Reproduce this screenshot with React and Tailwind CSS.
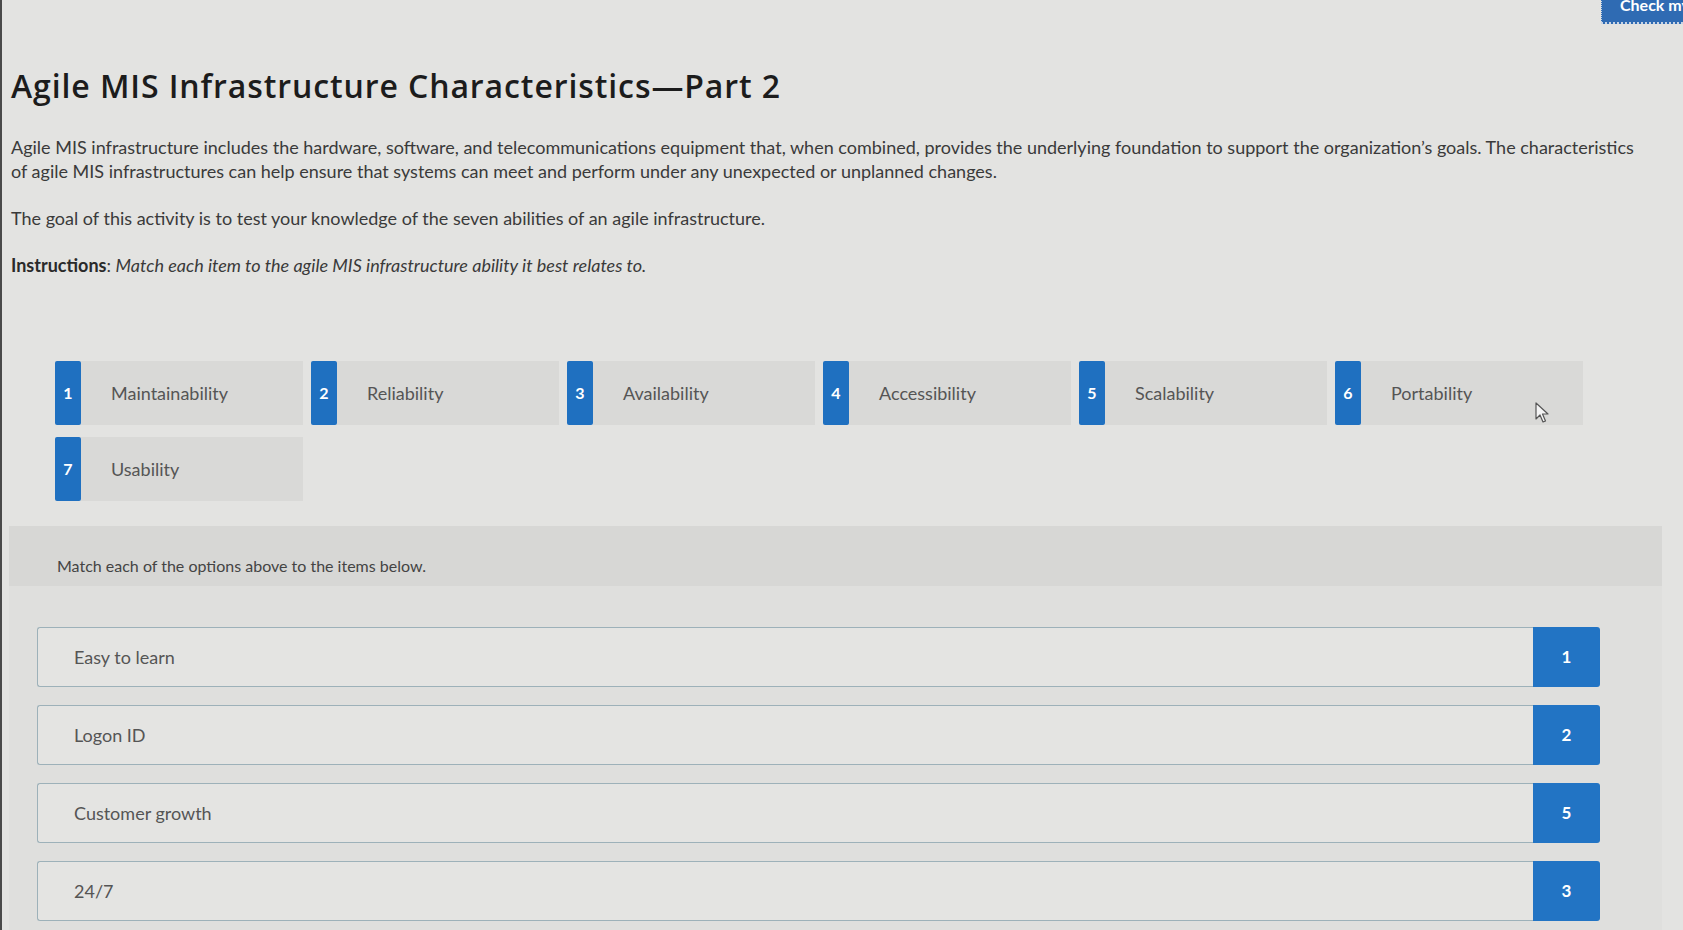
import React from "react";

const options = [
  ["1", "Maintainability"],
  ["2", "Reliability"],
  ["3", "Availability"],
  ["4", "Accessibility"],
  ["5", "Scalability"],
  ["6", "Portability"],
  ["7", "Usability"],
];

const rows = [
  ["Easy to learn", "1"],
  ["Logon ID", "2"],
  ["Customer growth", "5"],
  ["24/7", "3"],
];

export default function App() {
  return (
    <div className="relative w-[1683px] h-[930px] overflow-hidden bg-[#e3e3e1] border-l-2 border-[#4a4a4a] font-['Lato',sans-serif] text-[#333]">
      <div className="flex h-[24px]">
        <div className="ml-[1599px] -mt-[12px] h-[36px] w-[130px] shrink-0 bg-[#2f6bb3] border-l border-b-2 border-dotted border-[#c8d4e4] pl-[18px] flex items-center text-white font-bold text-[16px]">
          Check my work
        </div>
      </div>

      <h1 className="pl-[9px] mt-[43px] h-[38px] font-['Open_Sans',sans-serif] text-[32px] leading-[38px] tracking-[0.9px] font-semibold text-[#1c1c1c] whitespace-nowrap">
        Agile MIS Infrastructure Characteristics—Part 2
      </h1>

      <p className="pl-[9px] mt-[30px] text-[18px] leading-[24px] text-[#3a3a3a] whitespace-nowrap">
        Agile MIS infrastructure includes the hardware, software, and telecommunications equipment that, when combined, provides the underlying foundation to support the organization’s goals. The characteristics
        <br />
        of agile MIS infrastructures can help ensure that systems can meet and perform under any unexpected or unplanned changes.
      </p>

      <p className="pl-[9px] mt-[23px] text-[18px] leading-[24px] text-[#3a3a3a]">
        The goal of this activity is to test your knowledge of the seven abilities of an agile infrastructure.
      </p>

      <p className="pl-[9px] mt-[23px] text-[18px] leading-[24px] text-[#3a3a3a]">
        <span className="font-bold text-[#2a2a2a]">Instructions</span>: <span className="italic">Match each item to the agile MIS infrastructure ability it best relates to.</span>
      </p>

      <div className="pl-[53px] mt-[84px] grid grid-cols-[repeat(6,248px)] gap-x-[8px] gap-y-[12px]">
        {options.map(([n, label]) => (
          <div key={n} className="flex h-[64px]">
            <div className="w-[26px] shrink-0 bg-[#1f70c0] rounded-[2px] flex items-center justify-center text-white font-bold text-[16px]">
              {n}
            </div>
            <div className="flex-1 bg-[#d9d9d7] pl-[30px] flex items-center text-[18px] text-[#555]">
              {label}
            </div>
          </div>
        ))}
      </div>

      <div className="ml-[7px] mt-[25px] w-[1653px] bg-[#dfdfdd]">
        <div className="h-[60px] bg-[#d7d7d5] pl-[48px] pt-[28px] text-[16px] leading-[24px] text-[#444]">
          Match each of the options above to the items below.
        </div>
        <div className="pl-[28px] pt-[41px] pb-[20px] flex flex-col gap-[18px]">
          {rows.map(([label, n]) => (
            <div key={label} className="flex h-[60px]">
              <div className="w-[1496px] border border-[#9db1b9] border-r-0 rounded-l-[3px] bg-[#e4e4e2] pl-[36px] flex items-center text-[18px] text-[#555]">
                {label}
              </div>
              <div className="w-[67px] bg-[#2274c4] rounded-r-[3px] flex items-center justify-center text-white font-bold text-[17px]">
                {n}
              </div>
            </div>
          ))}
        </div>
      </div>

      <svg className="absolute left-[1533px] top-[402px]" width="16" height="22" viewBox="0 0 16 22">
        <path d="M1 1 L1 17 L5 13 L8 20 L10.5 19 L7.5 12 L13 12 Z" fill="#f4f4f4" stroke="#555" strokeWidth="1.2" strokeLinejoin="round" />
      </svg>
    </div>
  );
}
